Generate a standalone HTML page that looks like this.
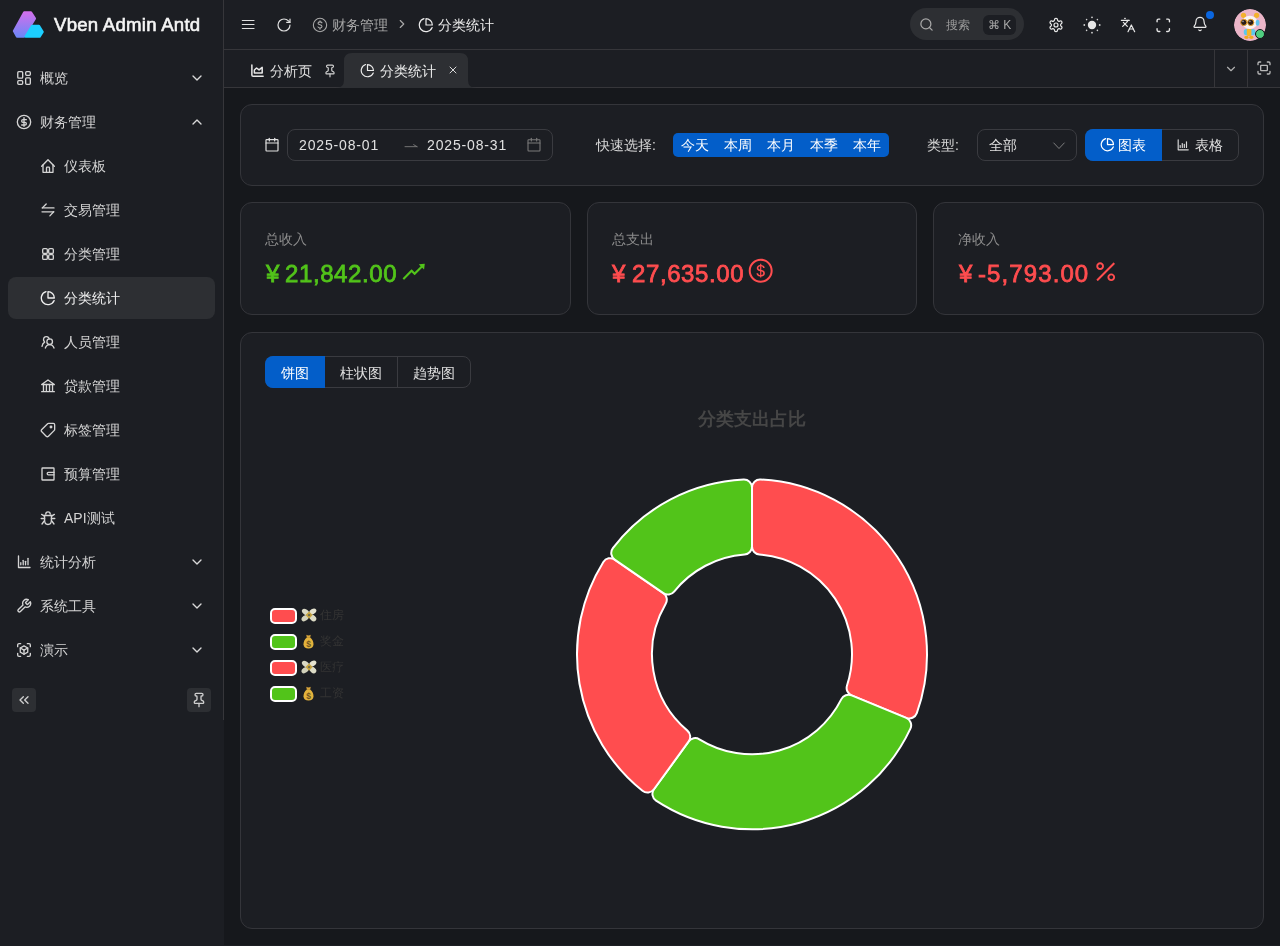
<!DOCTYPE html><html><head><meta charset="utf-8"><style>
*{box-sizing:border-box;margin:0;padding:0}
html,body{width:1280px;height:946px;overflow:hidden}
body{background:#16181c;font-family:"Liberation Sans",sans-serif;color:#f2f2f2;position:relative;font-size:14px}
.abs{position:absolute}
svg{display:block}
.t{position:absolute;white-space:nowrap;line-height:20px;font-size:14px;transform:translateY(1px);will-change:transform}
.l{transform:none}
.card{position:absolute;background:#1c1e23;border:1px solid #34353a;border-radius:12px}
</style></head><body>
<div class="abs" style="left:0;top:0;width:224px;height:946px;background:#1c1e23"></div>
<div class="abs" style="left:223px;top:0;width:1px;height:720px;background:#36363a"></div>
<svg class="abs" style="left:8px;top:6px" width="40" height="36" viewBox="0 0 40 36">
<defs><linearGradient id="lg1" x1="0" y1="0" x2="0" y2="1"><stop offset="0" stop-color="#d070ec"/><stop offset="1" stop-color="#6f86f7"/></linearGradient></defs>
<path d="M16.2 6.5 H22.9 L26.8 12.5 L15.8 30.5 H9 L6 25 Z" fill="url(#lg1)" stroke="url(#lg1)" stroke-width="2.4" stroke-linejoin="round"/>
<path d="M24.2 20 H30.9 L34.6 25.9 L31.6 30.6 H17.6 Z" fill="#1ccfff" stroke="#1ccfff" stroke-width="2.4" stroke-linejoin="round"/>
</svg>
<div class="t l" style="left:53.5px;top:12.5px;line-height:24px;font-size:18.6px;font-weight:normal;-webkit-text-stroke:0.6px #f5f5f5;letter-spacing:0.25px;color:#f5f5f5">Vben Admin Antd</div>
<svg class="abs" style="left:16px;top:70px" width="16" height="16" viewBox="0 0 24 24" fill="none" stroke="#d4d4d4" stroke-width="2.0" stroke-linecap="round" stroke-linejoin="round" ><rect x="2.65" y="2.5" width="7.35" height="9.7" rx="1.5"/><rect x="14.5" y="2.5" width="7" height="5.5" rx="1.5"/><rect x="2.65" y="16" width="7.35" height="5.5" rx="1.5"/><rect x="14.5" y="11.8" width="7" height="9.7" rx="1.5"/></svg>
<div class="t" style="left:40px;top:67px;color:#d4d4d4">概览</div>
<svg class="abs" style="left:189px;top:70px" width="16" height="16" viewBox="0 0 24 24" fill="none" stroke="#d9d9d9" stroke-width="2" stroke-linecap="round" stroke-linejoin="round" ><path d="m6 9 6 6 6-6"/></svg>
<svg class="abs" style="left:16px;top:114px" width="16" height="16" viewBox="0 0 24 24" fill="none" stroke="#d4d4d4" stroke-width="2.0" stroke-linecap="round" stroke-linejoin="round" ><circle cx="12" cy="12" r="10"/><path d="M15.5 8.5h-5a2 2 0 1 0 0 4h3a2 2 0 1 1 0 4h-5"/><path d="M12 18.5V5.5"/></svg>
<div class="t" style="left:40px;top:111px;color:#d4d4d4">财务管理</div>
<svg class="abs" style="left:189px;top:114px" width="16" height="16" viewBox="0 0 24 24" fill="none" stroke="#d9d9d9" stroke-width="2" stroke-linecap="round" stroke-linejoin="round" ><path d="m18 15-6-6-6 6"/></svg>
<svg class="abs" style="left:40px;top:158px" width="16" height="16" viewBox="0 0 24 24" fill="none" stroke="#d4d4d4" stroke-width="2.0" stroke-linecap="round" stroke-linejoin="round" ><path d="M2.5 12.5 L12 2.5 L21.5 12.5"/><path d="M4.5 10.5 V21.5 H19.5 V10.5"/><path d="M9.75 21.5 V15 a1.2 1.2 0 0 1 1.2-1.2 h2.1 a1.2 1.2 0 0 1 1.2 1.2 V21.5"/></svg>
<div class="t" style="left:64px;top:155px;color:#d4d4d4">仪表板</div>
<svg class="abs" style="left:40px;top:202px" width="16" height="16" viewBox="0 0 24 24" fill="none" stroke="#d4d4d4" stroke-width="2.0" stroke-linecap="round" stroke-linejoin="round" ><path d="M3.5 8.85h17.5"/><path d="M3.5 8.85L9.3 3"/><path d="M3 14.7h17.5"/><path d="M20.5 14.7L14.8 20.8"/></svg>
<div class="t" style="left:64px;top:199px;color:#d4d4d4">交易管理</div>
<svg class="abs" style="left:40px;top:246px" width="16" height="16" viewBox="0 0 24 24" fill="none" stroke="#d4d4d4" stroke-width="2.0" stroke-linecap="round" stroke-linejoin="round" ><rect x="4" y="4" width="7" height="7" rx="1.8"/><rect x="13" y="4" width="7" height="7" rx="1.8"/><rect x="13" y="13" width="7" height="7" rx="1.8"/><rect x="4" y="13" width="7" height="7" rx="1.8"/></svg>
<div class="t" style="left:64px;top:243px;color:#d4d4d4">分类管理</div>
<div class="abs" style="left:8px;top:277px;width:207px;height:42px;border-radius:8px;background:#2d2f33"></div>
<svg class="abs" style="left:40px;top:290px" width="16" height="16" viewBox="0 0 24 24" fill="none" stroke="#f0f0f0" stroke-width="2.0" stroke-linecap="round" stroke-linejoin="round" ><path d="M21.5 12A9.5 9.5 0 0 0 12 2.5v9.5z"/><path d="M21.21 15.89A10 10 0 1 1 9 2.45"/></svg>
<div class="t" style="left:64px;top:287px;color:#f0f0f0">分类统计</div>
<svg class="abs" style="left:40px;top:334px" width="16" height="16" viewBox="0 0 24 24" fill="none" stroke="#d4d4d4" stroke-width="2.0" stroke-linecap="round" stroke-linejoin="round" ><path d="M6.5 11.2 A4.3 4.3 0 1 1 13.8 7.5"/><path d="M3 18.5 C3.5 15.5 5 13.2 7 12.2"/><circle cx="14.5" cy="11.5" r="4.2"/><path d="M8 21 C9 17.8 11.3 15.9 14.5 15.9 S20 17.8 21 21"/></svg>
<div class="t" style="left:64px;top:331px;color:#d4d4d4">人员管理</div>
<svg class="abs" style="left:40px;top:378px" width="16" height="16" viewBox="0 0 24 24" fill="none" stroke="#d4d4d4" stroke-width="2.0" stroke-linecap="round" stroke-linejoin="round" ><path d="M2.5 9.75 L12 3 L21.5 9.75 Z"/><path d="M5.2 9.75 V20"/><path d="M9.6 9.75 V20"/><path d="M14.3 9.75 V20"/><path d="M18.8 9.75 V20"/><path d="M2.5 20.5 H21.5"/></svg>
<div class="t" style="left:64px;top:375px;color:#d4d4d4">贷款管理</div>
<svg class="abs" style="left:40px;top:422px" width="16" height="16" viewBox="0 0 24 24" fill="none" stroke="#d4d4d4" stroke-width="2.0" stroke-linecap="round" stroke-linejoin="round" ><g transform="translate(24,0) scale(-1,1)"><path d="M12.586 2.586A2 2 0 0 0 11.172 2H4a2 2 0 0 0-2 2v7.172a2 2 0 0 0 .586 1.414l8.704 8.704a2.426 2.426 0 0 0 3.42 0l6.58-6.58a2.426 2.426 0 0 0 0-3.42z"/><circle cx="7.5" cy="7.5" r="1.2"/></g></svg>
<div class="t" style="left:64px;top:419px;color:#d4d4d4">标签管理</div>
<svg class="abs" style="left:40px;top:466px" width="16" height="16" viewBox="0 0 24 24" fill="none" stroke="#d4d4d4" stroke-width="2.0" stroke-linecap="round" stroke-linejoin="round" ><rect x="3" y="3" width="18" height="18" rx="0.8"/><path d="M21 9.6 H12.6 a1.8 1.8 0 0 0 0 3.6 H21"/></svg>
<div class="t" style="left:64px;top:463px;color:#d4d4d4">预算管理</div>
<svg class="abs" style="left:40px;top:510px" width="16" height="16" viewBox="0 0 24 24" fill="none" stroke="#d4d4d4" stroke-width="2.0" stroke-linecap="round" stroke-linejoin="round" ><path d="M8.6 6.2 a3.4 3.4 0 0 1 6.8 0"/><path d="M5.2 8.3 H18.8"/><path d="M6.9 8.3 V15 C6.9 19 9.2 21.8 12 21.8 C14.8 21.8 17.1 19 17.1 15 V8.3"/><path d="M2.5 6.5 L6.2 9"/><path d="M1.8 12.8 H6.9"/><path d="M3 21 L6.3 16.5"/><path d="M21.5 6.5 L17.8 9"/><path d="M22.2 12.8 H17.1"/><path d="M21 21 L17.7 16.5"/></svg>
<div class="t" style="left:64px;top:507px;color:#d4d4d4">API测试</div>
<svg class="abs" style="left:16px;top:554px" width="16" height="16" viewBox="0 0 24 24" fill="none" stroke="#d4d4d4" stroke-width="2.0" stroke-linecap="round" stroke-linejoin="round" ><path d="M3.75 3 V20.25 H21"/><path d="M7.2 16.2 V13"/><path d="M10.8 16.2 V9.5"/><path d="M14.3 16.2 V11"/><path d="M18 16.2 V6.5"/></svg>
<div class="t" style="left:40px;top:551px;color:#d4d4d4">统计分析</div>
<svg class="abs" style="left:189px;top:554px" width="16" height="16" viewBox="0 0 24 24" fill="none" stroke="#d9d9d9" stroke-width="2" stroke-linecap="round" stroke-linejoin="round" ><path d="m6 9 6 6 6-6"/></svg>
<svg class="abs" style="left:16px;top:598px" width="16" height="16" viewBox="0 0 24 24" fill="none" stroke="#d4d4d4" stroke-width="2.0" stroke-linecap="round" stroke-linejoin="round" ><path d="M14.7 6.3a1 1 0 0 0 0 1.4l1.6 1.6a1 1 0 0 0 1.4 0l3.77-3.77a6 6 0 0 1-7.94 7.94l-6.91 6.91a2.12 2.12 0 0 1-3-3l6.91-6.91a6 6 0 0 1 7.94-7.94l-3.76 3.76z"/></svg>
<div class="t" style="left:40px;top:595px;color:#d4d4d4">系统工具</div>
<svg class="abs" style="left:189px;top:598px" width="16" height="16" viewBox="0 0 24 24" fill="none" stroke="#d9d9d9" stroke-width="2" stroke-linecap="round" stroke-linejoin="round" ><path d="m6 9 6 6 6-6"/></svg>
<svg class="abs" style="left:16px;top:642px" width="16" height="16" viewBox="0 0 24 24" fill="none" stroke="#d4d4d4" stroke-width="2.0" stroke-linecap="round" stroke-linejoin="round" ><path d="M2.5 7V4.5a2 2 0 0 1 2-2H7"/><path d="M17 2.5h2.5a2 2 0 0 1 2 2V7"/><path d="M21.5 17v2.5a2 2 0 0 1-2 2H17"/><path d="M7 21.5H4.5a2 2 0 0 1-2-2V17"/><path d="M12 5.8l5.6 3.2v6.2L12 18.4l-5.6-3.2V9z"/><path d="M6.4 9l5.6 3.2 5.6-3.2"/><path d="M12 12.2v6.2"/></svg>
<div class="t" style="left:40px;top:639px;color:#d4d4d4">演示</div>
<svg class="abs" style="left:189px;top:642px" width="16" height="16" viewBox="0 0 24 24" fill="none" stroke="#d9d9d9" stroke-width="2" stroke-linecap="round" stroke-linejoin="round" ><path d="m6 9 6 6 6-6"/></svg>
<div class="abs" style="left:12px;top:688px;width:24px;height:24px;border-radius:4px;background:#2d2f33"></div>
<svg class="abs" style="left:16px;top:692px" width="16" height="16" viewBox="0 0 24 24" fill="none" stroke="#cfcfcf" stroke-width="2" stroke-linecap="round" stroke-linejoin="round" ><path d="m11 17-5-5 5-5"/><path d="m18 17-5-5 5-5"/></svg>
<div class="abs" style="left:187px;top:688px;width:24px;height:24px;border-radius:4px;background:#2d2f33"></div>
<svg class="abs" style="left:191px;top:692px" width="16" height="16" viewBox="0 0 24 24" fill="none" stroke="#cfcfcf" stroke-width="2" stroke-linecap="round" stroke-linejoin="round" ><path d="M12 17v5"/><path d="M9 10.76a2 2 0 0 1-1.11 1.79l-1.78.9A2 2 0 0 0 5 15.24V16a1 1 0 0 0 1 1h12a1 1 0 0 0 1-1v-.76a2 2 0 0 0-1.11-1.79l-1.78-.9A2 2 0 0 1 15 10.76V7a1 1 0 0 1 1-1 2 2 0 0 0 0-4H8a2 2 0 0 0 0 4 1 1 0 0 1 1 1z"/></svg>
<div class="abs" style="left:224px;top:0;width:1056px;height:50px;background:#1c1e23;border-bottom:1px solid #36363a"></div>
<svg class="abs" style="left:240px;top:16px" width="16" height="16" viewBox="0 0 24 24" fill="none" stroke="#e0e0e0" stroke-width="1.8" stroke-linecap="round" stroke-linejoin="round" ><path d="M3.5 6.75h17.5"/><path d="M3.5 12.75h17.5"/><path d="M3.5 18.75h17.5"/></svg>
<svg class="abs" style="left:276px;top:17px" width="16" height="16" viewBox="0 0 24 24" fill="none" stroke="#e0e0e0" stroke-width="1.8" stroke-linecap="round" stroke-linejoin="round" ><path d="M21 12a9 9 0 1 1-9-9c2.52 0 4.93 1 6.74 2.74L21 8"/><path d="M21 3v5h-5"/></svg>
<svg class="abs" style="left:312px;top:16.5px" width="16" height="16" viewBox="0 0 24 24" fill="none" stroke="#a8a8a8" stroke-width="1.6" stroke-linecap="round" stroke-linejoin="round" ><circle cx="12" cy="12" r="10"/><path d="M15 8.8c-.6-1-1.7-1.5-3-1.5-1.8 0-3 .9-3 2.2 0 2.9 6 1.6 6 4.6 0 1.4-1.3 2.4-3 2.4-1.4 0-2.6-.6-3.1-1.7"/><path d="M12 5.5v1.8"/><path d="M12 16.7v1.8"/></svg>
<div class="t" style="left:332px;top:14px;color:#a8a8a8">财务管理</div>
<svg class="abs" style="left:395px;top:17px" width="14" height="14" viewBox="0 0 24 24" fill="none" stroke="#a8a8a8" stroke-width="2" stroke-linecap="round" stroke-linejoin="round" ><path d="m9 18 6-6-6-6"/></svg>
<svg class="abs" style="left:418px;top:17px" width="16" height="16" viewBox="0 0 24 24" fill="none" stroke="#ececec" stroke-width="1.8" stroke-linecap="round" stroke-linejoin="round" ><path d="M21.5 12A9.5 9.5 0 0 0 12 2.5v9.5z"/><path d="M21.21 15.89A10 10 0 1 1 9 2.45"/></svg>
<div class="t" style="left:438px;top:14px;color:#ececec">分类统计</div>
<div class="abs" style="left:910px;top:8px;width:114px;height:32px;border-radius:16px;background:#2d2f33"></div>
<svg class="abs" style="left:919px;top:17px" width="15" height="15" viewBox="0 0 24 24" fill="none" stroke="#a8a8a8" stroke-width="2" stroke-linecap="round" stroke-linejoin="round" ><circle cx="11" cy="11" r="8"/><path d="m21 21-4.3-4.3"/></svg>
<div class="t" style="left:946px;top:14px;font-size:12px;color:#9a9a9a">搜索</div>
<div class="abs" style="left:983px;top:15px;width:33px;height:20px;border-radius:6px;background:#1c1e23"></div>
<div class="t" style="left:988px;top:14px;font-size:12px;color:#a8a8a8">⌘ K</div>
<svg class="abs" style="left:1048px;top:16.8px" width="16" height="16" viewBox="0 0 24 24" fill="none" stroke="#e8e8e8" stroke-width="1.8" stroke-linecap="round" stroke-linejoin="round" ><path d="M12.22 2h-.44a2 2 0 0 0-2 2v.18a2 2 0 0 1-1 1.73l-.43.25a2 2 0 0 1-2 0l-.15-.08a2 2 0 0 0-2.73.73l-.22.38a2 2 0 0 0 .73 2.73l.15.1a2 2 0 0 1 1 1.72v.51a2 2 0 0 1-1 1.74l-.15.09a2 2 0 0 0-.73 2.73l.22.38a2 2 0 0 0 2.73.73l.15-.08a2 2 0 0 1 2 0l.43.25a2 2 0 0 1 1 1.73V20a2 2 0 0 0 2 2h.44a2 2 0 0 0 2-2v-.18a2 2 0 0 1 1-1.73l.43-.25a2 2 0 0 1 2 0l.15.08a2 2 0 0 0 2.73-.73l.22-.39a2 2 0 0 0-.73-2.73l-.15-.08a2 2 0 0 1-1-1.74v-.5a2 2 0 0 1 1-1.74l.15-.09a2 2 0 0 0 .73-2.73l-.22-.38a2 2 0 0 0-2.73-.73l-.15.08a2 2 0 0 1-2 0l-.43-.25a2 2 0 0 1-1-1.73V4a2 2 0 0 0-2-2z"/><circle cx="12" cy="12" r="3"/></svg>
<svg class="abs" style="left:1083px;top:16px" width="18" height="18" viewBox="0 0 18 18"><circle cx="9" cy="9" r="4.2" fill="#e6e6e6"/>
<g fill="#d0d0d0"><circle cx="9" cy="1.3" r="0.9"/><circle cx="9" cy="16.7" r="0.9"/><circle cx="1.3" cy="9" r="0.9"/><circle cx="16.7" cy="9" r="0.9"/>
<circle cx="3.6" cy="3.6" r="0.8"/><circle cx="14.4" cy="3.6" r="0.8"/><circle cx="3.6" cy="14.4" r="0.8"/><circle cx="14.4" cy="14.4" r="0.8"/></g></svg>
<svg class="abs" style="left:1120px;top:16.8px" width="16" height="16" viewBox="0 0 24 24" fill="none" stroke="#e8e8e8" stroke-width="1.8" stroke-linecap="round" stroke-linejoin="round" ><path d="m5 8 6 6"/><path d="m4 14 6-6 2-3"/><path d="M2 5h12"/><path d="M7 2h1"/><path d="m22 22-5-10-5 10"/><path d="M14 18h6"/></svg>
<svg class="abs" style="left:1155.2px;top:16.5px" width="16.5" height="16.5" viewBox="0 0 24 24" fill="none" stroke="#e8e8e8" stroke-width="2" stroke-linecap="round" stroke-linejoin="round" ><path d="M3 7V5a2 2 0 0 1 2-2h2"/><path d="M17 3h2a2 2 0 0 1 2 2v2"/><path d="M21 17v2a2 2 0 0 1-2 2h-2"/><path d="M7 21H5a2 2 0 0 1-2-2v-2"/></svg>
<svg class="abs" style="left:1192px;top:16px" width="16" height="16" viewBox="0 0 24 24" fill="none" stroke="#e8e8e8" stroke-width="1.8" stroke-linecap="round" stroke-linejoin="round" ><path d="M10.268 21a2 2 0 0 0 3.464 0"/><path d="M3.262 15.326A1 1 0 0 0 4 17h16a1 1 0 0 0 .74-1.673C19.41 13.956 18 12.499 18 8A6 6 0 0 0 6 8c0 4.499-1.411 5.956-2.738 7.326"/></svg>
<div class="abs" style="left:1206px;top:10.5px;width:8px;height:8px;border-radius:50%;background:#0a66e0"></div>
<svg class="abs" style="left:1234px;top:8.5px" width="32" height="32" viewBox="0 0 32 32">
<defs><clipPath id="avc"><circle cx="16" cy="16" r="16"/></clipPath></defs>
<g clip-path="url(#avc)">
<circle cx="16" cy="16" r="16" fill="#ebb5c8"/>
<circle cx="9.5" cy="6.3" r="2.6" fill="#f3b12e"/><circle cx="22.6" cy="6.3" r="2.6" fill="#f3b12e"/>
<rect x="9.8" y="20" width="11.6" height="6.2" rx="2.6" fill="#5cc8ee"/>
<rect x="12.8" y="19.5" width="4.6" height="7.5" rx="1.2" fill="#f6b62a"/>
<ellipse cx="12.5" cy="28.3" rx="2.3" ry="1.6" fill="#f2a81e"/><ellipse cx="17.3" cy="28.3" rx="2.3" ry="1.6" fill="#f2a81e"/>
<ellipse cx="15.8" cy="13.4" rx="7.6" ry="6.6" fill="#f8f4f2"/>
<ellipse cx="23.6" cy="13.8" rx="1.9" ry="3" fill="#5fc2ec"/>
<circle cx="9.8" cy="13.4" r="3.1" fill="#2a1d18" stroke="#e9a22a" stroke-width="1"/>
<circle cx="16.7" cy="13.4" r="3.1" fill="#2a1d18" stroke="#e9a22a" stroke-width="1"/>
<circle cx="9" cy="12.4" r="0.8" fill="#9a9aa0"/><circle cx="15.9" cy="12.4" r="0.8" fill="#9a9aa0"/>
</g></svg>
<div class="abs" style="left:1254.7px;top:28.9px;width:10.6px;height:10.6px;border-radius:50%;background:#4fce7f;border:1.2px solid #14161a"></div>
<div class="abs" style="left:224px;top:50px;width:1056px;height:38px;background:#1c1e23;border-bottom:1px solid #36363a"></div>
<svg class="abs" style="left:250px;top:63px" width="15" height="15" viewBox="0 0 24 24" fill="none" stroke="#e8e8e8" stroke-width="2.4" stroke-linecap="round" stroke-linejoin="round" ><path d="M3 3v16a2 2 0 0 0 2 2h16"/><path d="M7 11.2l3.5-3.2 4 3 5-4v9H7z"/></svg>
<div class="t" style="left:270px;top:60px;font-size:14px;color:#e0e0e0">分析页</div>
<svg class="abs" style="left:323px;top:63.5px" width="14" height="14" viewBox="0 0 24 24" fill="none" stroke="#d0d0d0" stroke-width="2" stroke-linecap="round" stroke-linejoin="round" ><path d="M12 17v5"/><path d="M9 10.76a2 2 0 0 1-1.11 1.79l-1.78.9A2 2 0 0 0 5 15.24V16a1 1 0 0 0 1 1h12a1 1 0 0 0 1-1v-.76a2 2 0 0 0-1.11-1.79l-1.78-.9A2 2 0 0 1 15 10.76V7a1 1 0 0 1 1-1 2 2 0 0 0 0-4H8a2 2 0 0 0 0 4 1 1 0 0 1 1 1z"/></svg>
<svg class="abs" style="left:336px;top:53px" width="140" height="35" viewBox="0 0 140 35">
<path d="M0 35 Q8 35 8 27 V8 Q8 0 16 0 H124 Q132 0 132 8 V27 Q132 35 140 35 Z" fill="#2d2f33"/></svg>
<svg class="abs" style="left:360px;top:63px" width="15" height="15" viewBox="0 0 24 24" fill="none" stroke="#ececec" stroke-width="1.9" stroke-linecap="round" stroke-linejoin="round" ><path d="M21.5 12A9.5 9.5 0 0 0 12 2.5v9.5z"/><path d="M21.21 15.89A10 10 0 1 1 9 2.45"/></svg>
<div class="t" style="left:380px;top:60px;font-size:14px;color:#ececec">分类统计</div>
<svg class="abs" style="left:447px;top:64px" width="12" height="12" viewBox="0 0 24 24" fill="none" stroke="#d8d8d8" stroke-width="2" stroke-linecap="round" stroke-linejoin="round" ><path d="M18 6 6 18"/><path d="m6 6 12 12"/></svg>
<div class="abs" style="left:1214px;top:50px;width:1px;height:37px;background:#36363a"></div>
<div class="abs" style="left:1247px;top:50px;width:1px;height:37px;background:#36363a"></div>
<svg class="abs" style="left:1224px;top:62px" width="14" height="14" viewBox="0 0 24 24" fill="none" stroke="#b0b0b0" stroke-width="2" stroke-linecap="round" stroke-linejoin="round" ><path d="m6 9 6 6 6-6"/></svg>
<svg class="abs" style="left:1256px;top:60px" width="16" height="16" viewBox="0 0 24 24" fill="none" stroke="#b8b8b8" stroke-width="2" stroke-linecap="round" stroke-linejoin="round" ><path d="M3 7V5a2 2 0 0 1 2-2h2"/><path d="M17 3h2a2 2 0 0 1 2 2v2"/><path d="M21 17v2a2 2 0 0 1-2 2h-2"/><path d="M7 21H5a2 2 0 0 1-2-2v-2"/><rect width="10" height="8" x="7" y="8" rx="1"/></svg>
<div class="abs" style="left:224px;top:945px;width:1056px;height:1px;background:#1c1e23"></div>
<div class="card" style="left:240px;top:104px;width:1024px;height:82px"></div>
<svg class="abs" style="left:264px;top:137px" width="16" height="16" viewBox="0 0 24 24" fill="none" stroke="#e0e0e0" stroke-width="1.8" stroke-linecap="round" stroke-linejoin="round" ><rect x="3" y="4" width="18" height="17" rx="1"/><path d="M3 9h18"/><path d="M8 2v4"/><path d="M16 2v4"/></svg>
<div class="abs" style="left:287px;top:129px;width:266px;height:32px;border:1px solid #3a3b40;border-radius:8px"></div>
<div class="t l" style="left:299px;top:135px;letter-spacing:0.85px;color:#e0e0e0">2025-08-01</div>
<svg class="abs" style="left:403px;top:138px" width="16" height="16" viewBox="0 0 24 24" fill="none" stroke="#7a7a7a" stroke-width="1.4" stroke-linecap="round" stroke-linejoin="round" ><path d="M3 13h18"/><path d="M21 13l-5-3"/></svg>
<div class="t l" style="left:427px;top:135px;letter-spacing:0.85px;color:#e0e0e0">2025-08-31</div>
<svg class="abs" style="left:526px;top:137px" width="16" height="16" viewBox="0 0 24 24" fill="none" stroke="#7a7a7a" stroke-width="1.6" stroke-linecap="round" stroke-linejoin="round" ><rect x="3" y="4" width="18" height="17" rx="1"/><path d="M3 9h18"/><path d="M8 2v4"/><path d="M16 2v4"/></svg>
<div class="t" style="left:596px;top:134.2px;color:#d8d8d8">快速选择:</div>
<div class="abs" style="left:673px;top:133px;width:216px;height:24px;border-radius:5px;background:#035ec9"></div>
<div class="t" style="left:681.0px;top:134.2px;color:#fff">今天</div>
<div class="t" style="left:724.1px;top:134.2px;color:#fff">本周</div>
<div class="t" style="left:767.2px;top:134.2px;color:#fff">本月</div>
<div class="t" style="left:810.3px;top:134.2px;color:#fff">本季</div>
<div class="t" style="left:853.4px;top:134.2px;color:#fff">本年</div>
<div class="t" style="left:927px;top:134.2px;color:#d8d8d8">类型:</div>
<div class="abs" style="left:977px;top:129px;width:100px;height:32px;border:1px solid #3a3b40;border-radius:8px"></div>
<div class="t" style="left:989px;top:134.2px;color:#e0e0e0">全部</div>
<svg class="abs" style="left:1052px;top:137.5px" width="14" height="14" viewBox="0 0 24 24" fill="none" stroke="#8a8a8a" stroke-width="1.5" stroke-linecap="round" stroke-linejoin="round" ><path d="m3 8.5 9 9.5 9-9.5"/></svg>
<div class="abs" style="left:1085px;top:129px;width:154px;height:32px;border:1px solid #3a3b40;border-radius:8px"></div>
<div class="abs" style="left:1085px;top:129px;width:77px;height:32px;border-radius:8px 0 0 8px;background:#035ec9"></div>
<svg class="abs" style="left:1100px;top:137px" width="15" height="15" viewBox="0 0 24 24" fill="none" stroke="#fff" stroke-width="2" stroke-linecap="round" stroke-linejoin="round" ><path d="M21.5 12A9.5 9.5 0 0 0 12 2.5v9.5z"/><path d="M21.21 15.89A10 10 0 1 1 9 2.45"/></svg>
<div class="t" style="left:1118px;top:134.2px;color:#fff">图表</div>
<svg class="abs" style="left:1176px;top:138px" width="14" height="14" viewBox="0 0 24 24" fill="none" stroke="#d8d8d8" stroke-width="2" stroke-linecap="round" stroke-linejoin="round" ><path d="M3.75 3 V20.25 H21"/><path d="M7.2 16.2 V13"/><path d="M10.8 16.2 V9.5"/><path d="M14.3 16.2 V11"/><path d="M18 16.2 V6.5"/></svg>
<div class="t" style="left:1195px;top:134.2px;color:#e0e0e0">表格</div>
<div class="card" style="left:240px;top:202px;width:330.67px;height:113px"></div>
<div class="t" style="left:265px;top:227.5px;color:#8c8c8c">总收入</div>
<div class="t" style="left:265.5px;top:257px;line-height:32px;font-size:24px;-webkit-text-stroke:0.8px #52c41a;color:#52c41a">¥</div>
<div class="t" style="left:285px;top:257px;line-height:32px;font-size:24px;-webkit-text-stroke:0.8px #52c41a;letter-spacing:0.6px;color:#52c41a">21,842.00</div>
<svg class="abs" style="left:400.3px;top:257.8px" width="27.4" height="27.4" viewBox="0 0 1024 1024"><path fill="#52c41a" d="M917 211.1l-199.2 24c-6.6.8-9.4 8.9-4.7 13.6l59.3 59.3-226 226-101.8-101.7c-6.3-6.3-16.4-6.2-22.6 0L100.3 754.1a8.03 8.03 0 000 11.3l45 45.2c3.1 3.1 8.2 3.1 11.3 0L433.3 534 535 635.7c6.3 6.2 16.4 6.2 22.6 0L829 364.5l59.3 59.3a8.01 8.01 0 0013.6-4.7l24-199.2c.7-5.1-3.7-9.5-8.9-8.8z"/></svg>
<div class="card" style="left:586.67px;top:202px;width:330.67px;height:113px"></div>
<div class="t" style="left:611.67px;top:227.5px;color:#8c8c8c">总支出</div>
<div class="t" style="left:612.17px;top:257px;line-height:32px;font-size:24px;-webkit-text-stroke:0.8px #ff4d4f;color:#ff4d4f">¥</div>
<div class="t" style="left:631.67px;top:257px;line-height:32px;font-size:24px;-webkit-text-stroke:0.8px #ff4d4f;letter-spacing:0.6px;color:#ff4d4f">27,635.00</div>
<svg class="abs" style="left:747.0px;top:257.3px" width="27.4" height="27.4" viewBox="0 0 1024 1024"><path fill="#ff4d4f" d="M512 64C264.6 64 64 264.6 64 512s200.6 448 448 448 448-200.6 448-448S759.4 64 512 64zm0 820c-205.4 0-372-166.6-372-372s166.6-372 372-372 372 166.6 372 372-166.6 372-372 372zm47.7-395.2l-25.4-5.9V348.6c38 5.2 61.5 30.1 65.5 59.2.5 4 3.9 6.9 7.9 6.9h44.9c4.7 0 8.4-4.1 8-8.8-6.1-62.3-57.4-102.3-125.9-109.2V263c0-4.4-3.6-8-8-8h-28.1c-4.4 0-8 3.6-8 8v33c-70.8 6.9-126.2 46-126.2 119 0 67.6 49.8 100.2 102.1 112.7l24.7 6.3v142.7c-44.2-5.9-69-29.5-74.1-61.3-.6-3.8-4-6.6-7.9-6.6H363c-4.7 0-8.4 4-8 8.7 4.5 55 46.2 105.6 135.2 112.1V761c0 4.4 3.6 8 8 8h28.4c4.4 0 8-3.6 8-8.1l-.2-31.7c78.3-6.9 134.3-48.8 134.3-124.4-.1-69.8-44.4-101-109.1-116.8zm-68.6-16.2c-5.6-1.6-10.3-3.1-15-5-33.8-12.2-49.5-31.9-49.5-57.3 0-36.3 27.5-57 64.5-61.7v124zM534.3 677V543.3c3.1.9 5.9 1.6 8.8 2.2 47.3 14.4 63.2 34.4 63.2 65.1 0 39.1-29.4 62.6-72 66.4z"/></svg>
<div class="card" style="left:933.33px;top:202px;width:330.67px;height:113px"></div>
<div class="t" style="left:958.33px;top:227.5px;color:#8c8c8c">净收入</div>
<div class="t" style="left:958.83px;top:257px;line-height:32px;font-size:24px;-webkit-text-stroke:0.8px #ff4d4f;color:#ff4d4f">¥</div>
<div class="t" style="left:978.33px;top:257px;line-height:32px;font-size:24px;-webkit-text-stroke:0.8px #ff4d4f;letter-spacing:1.1px;color:#ff4d4f">-5,793.00</div>
<svg class="abs" style="left:1091.5px;top:258.2px" width="27.4" height="27.4" viewBox="0 0 1024 1024"><path fill="#ff4d4f" d="M855.7 210.8l-42.4-42.4a8.03 8.03 0 00-11.3 0L168.3 801.9a8.03 8.03 0 000 11.3l42.4 42.4c3.1 3.1 8.2 3.1 11.3 0L855.6 222c3.2-3 3.2-8.1.1-11.2zM304 448c79.4 0 144-64.6 144-144s-64.6-144-144-144-144 64.6-144 144 64.6 144 144 144zm0-216c39.7 0 72 32.3 72 72s-32.3 72-72 72-72-32.3-72-72 32.3-72 72-72zm416 344c-79.4 0-144 64.6-144 144s64.6 144 144 144 144-64.6 144-144-64.6-144-144-144zm0 216c-39.7 0-72-32.3-72-72s32.3-72 72-72 72 32.3 72 72-32.3 72-72 72z"/></svg>
<div class="card" style="left:240px;top:332px;width:1024px;height:597px"></div>
<div class="abs" style="left:265px;top:356px;width:206px;height:32px;border:1px solid #3a3b40;border-radius:8px"></div>
<div class="abs" style="left:265px;top:356px;width:60px;height:32px;border-radius:8px 0 0 8px;background:#035ec9"></div>
<div class="abs" style="left:397px;top:356px;width:1px;height:32px;background:#3a3b40"></div>
<div class="t" style="left:281px;top:362px;color:#fff">饼图</div>
<div class="t" style="left:340px;top:362px;color:#e0e0e0">柱状图</div>
<div class="t" style="left:413px;top:362px;color:#e0e0e0">趋势图</div>
<div class="t" style="left:698px;top:406px;line-height:24px;font-size:18px;font-weight:bold;color:#464646">分类支出占比</div>
<div class="abs" style="left:270px;top:607.5px;width:27px;height:16px;border-radius:5px;background:#ff4d4f;border:2px solid #fff"></div>
<svg class="abs" style="left:300.5px;top:607.5px" width="16" height="14" viewBox="0 0 16 14">
<ellipse cx="4.5" cy="4" rx="4" ry="2.6" transform="rotate(35 4.5 4)" fill="#d9d8c4"/>
<ellipse cx="11.8" cy="3.5" rx="3.8" ry="2.6" transform="rotate(-30 11.8 3.5)" fill="#e4e2cf"/>
<ellipse cx="4" cy="10.2" rx="3.8" ry="2.6" transform="rotate(-35 4 10.2)" fill="#d2d1bb"/>
<ellipse cx="12" cy="10.2" rx="3.6" ry="2.8" transform="rotate(40 12 10.2)" fill="#dcdbc6"/>
<rect x="5.6" y="4.6" width="5" height="5" transform="rotate(45 8.1 7.1)" fill="#c9a640"/>
<circle cx="8.1" cy="7.1" r="1.2" fill="#6b6a52"/></svg>
<div class="t" style="left:320px;top:604.0px;font-size:12px;color:#333">住房</div>
<div class="abs" style="left:270px;top:633.5px;width:27px;height:16px;border-radius:5px;background:#52c41a;border:2px solid #fff"></div>
<svg class="abs" style="left:303px;top:634.0px" width="11" height="15" viewBox="0 0 11 15">
<path d="M3.3 0.8 Q5.5 2 7.7 0.8 L7.2 3.4 Q5.5 4 3.8 3.4 Z" fill="#d9a43a"/>
<path d="M3.8 3.4 Q0.3 6.5 0.5 10.5 Q0.8 14.5 5.5 14.5 Q10.2 14.5 10.5 10.5 Q10.7 6.5 7.2 3.4 Z" fill="#e3b23c"/>
<text x="5.5" y="12.6" text-anchor="middle" font-family="Liberation Sans" font-weight="bold" font-size="8.5" fill="#6e5520">$</text></svg>
<div class="t" style="left:320px;top:630.0px;font-size:12px;color:#333">奖金</div>
<div class="abs" style="left:270px;top:659.5px;width:27px;height:16px;border-radius:5px;background:#ff4d4f;border:2px solid #fff"></div>
<svg class="abs" style="left:300.5px;top:659.5px" width="16" height="14" viewBox="0 0 16 14">
<ellipse cx="4.5" cy="4" rx="4" ry="2.6" transform="rotate(35 4.5 4)" fill="#d9d8c4"/>
<ellipse cx="11.8" cy="3.5" rx="3.8" ry="2.6" transform="rotate(-30 11.8 3.5)" fill="#e4e2cf"/>
<ellipse cx="4" cy="10.2" rx="3.8" ry="2.6" transform="rotate(-35 4 10.2)" fill="#d2d1bb"/>
<ellipse cx="12" cy="10.2" rx="3.6" ry="2.8" transform="rotate(40 12 10.2)" fill="#dcdbc6"/>
<rect x="5.6" y="4.6" width="5" height="5" transform="rotate(45 8.1 7.1)" fill="#c9a640"/>
<circle cx="8.1" cy="7.1" r="1.2" fill="#6b6a52"/></svg>
<div class="t" style="left:320px;top:656.0px;font-size:12px;color:#333">医疗</div>
<div class="abs" style="left:270px;top:685.5px;width:27px;height:16px;border-radius:5px;background:#52c41a;border:2px solid #fff"></div>
<svg class="abs" style="left:303px;top:686.0px" width="11" height="15" viewBox="0 0 11 15">
<path d="M3.3 0.8 Q5.5 2 7.7 0.8 L7.2 3.4 Q5.5 4 3.8 3.4 Z" fill="#d9a43a"/>
<path d="M3.8 3.4 Q0.3 6.5 0.5 10.5 Q0.8 14.5 5.5 14.5 Q10.2 14.5 10.5 10.5 Q10.7 6.5 7.2 3.4 Z" fill="#e3b23c"/>
<text x="5.5" y="12.6" text-anchor="middle" font-family="Liberation Sans" font-weight="bold" font-size="8.5" fill="#6e5520">$</text></svg>
<div class="t" style="left:320px;top:682.0px;font-size:12px;color:#333">工资</div>
<svg class="abs" style="left:0;top:0" width="1280" height="946" viewBox="0 0 1280 946"><path d="M752.00,487.49 A8,8 0 0 1 760.38,479.50 A175,175 0 0 1 916.80,713.16 A8,8 0 0 1 906.22,717.87 L851.58,695.34 A8,8 0 0 1 847.02,685.45 A100,100 0 0 0 759.41,554.57 A8,8 0 0 1 752.00,546.60 Z" fill="#ff4d4f" stroke="#fff" stroke-width="2"/><path d="M906.22,717.87 A8,8 0 0 1 910.42,728.66 A175,175 0 0 1 656.04,800.64 A8,8 0 0 1 653.95,789.25 L688.69,741.43 A8,8 0 0 1 699.38,739.33 A100,100 0 0 0 841.38,699.15 A8,8 0 0 1 851.58,695.34 Z" fill="#52c41a" stroke="#fff" stroke-width="2"/><path d="M653.95,789.25 A8,8 0 0 1 642.47,790.79 A175,175 0 0 1 603.36,561.94 A8,8 0 0 1 614.69,559.58 L663.35,593.14 A8,8 0 0 1 665.71,603.77 A100,100 0 0 0 687.39,730.63 A8,8 0 0 1 688.69,741.43 Z" fill="#ff4d4f" stroke="#fff" stroke-width="2"/><path d="M614.69,559.58 A8,8 0 0 1 612.88,548.14 A175,175 0 0 1 743.62,479.50 A8,8 0 0 1 752.00,487.49 L752.00,546.60 A8,8 0 0 1 744.59,554.57 A100,100 0 0 0 674.12,591.57 A8,8 0 0 1 663.35,593.14 Z" fill="#52c41a" stroke="#fff" stroke-width="2"/></svg>
</body></html>
